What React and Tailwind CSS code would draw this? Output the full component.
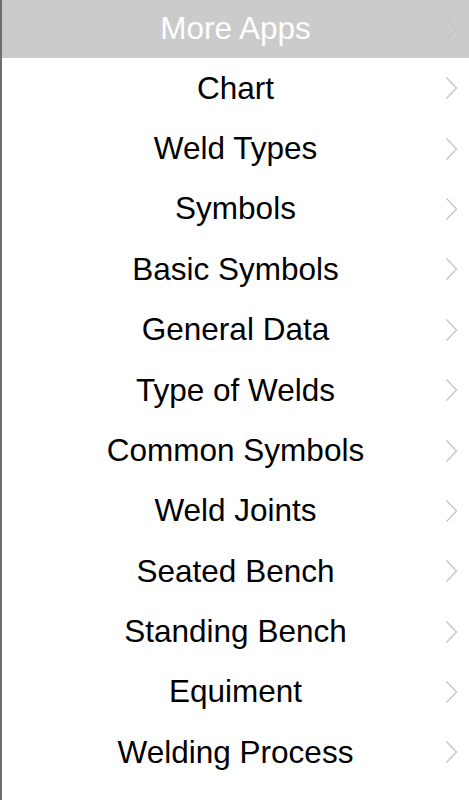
import React from 'react';

const items = [
  'Chart',
  'Weld Types',
  'Symbols',
  'Basic Symbols',
  'General Data',
  'Type of Welds',
  'Common Symbols',
  'Weld Joints',
  'Seated Bench',
  'Standing Bench',
  'Equiment',
  'Welding Process',
  'Welding Terms',
];

function Chevron() {
  return (
    <svg width="13" height="24" viewBox="0 0 13 24" className="absolute right-[11px] top-1/2 -translate-y-1/2">
      <path d="M1.5 1.5 L11.5 12 L1.5 22.5" fill="none" stroke="#c2c2c2" strokeWidth="1.2" />
    </svg>
  );
}

function App() {
  return (
    <div
      className="h-[800px] w-[469px] overflow-hidden bg-white border-l-2 border-[#6e6e6e]"
      style={{ fontFamily: '"Liberation Sans", Arial, sans-serif' }}
    >
      <div className="relative flex h-[58px] items-center justify-center bg-[#cbcbcb] text-[31.5px] text-white">
        More Apps
        <Chevron />
      </div>
      {items.map((item) => (
        <div
          key={item}
          className="relative flex h-[60.4px] items-center justify-center text-[31.5px] text-black"
        >
          {item}
          <Chevron />
        </div>
      ))}
    </div>
  );
}

export default App;
